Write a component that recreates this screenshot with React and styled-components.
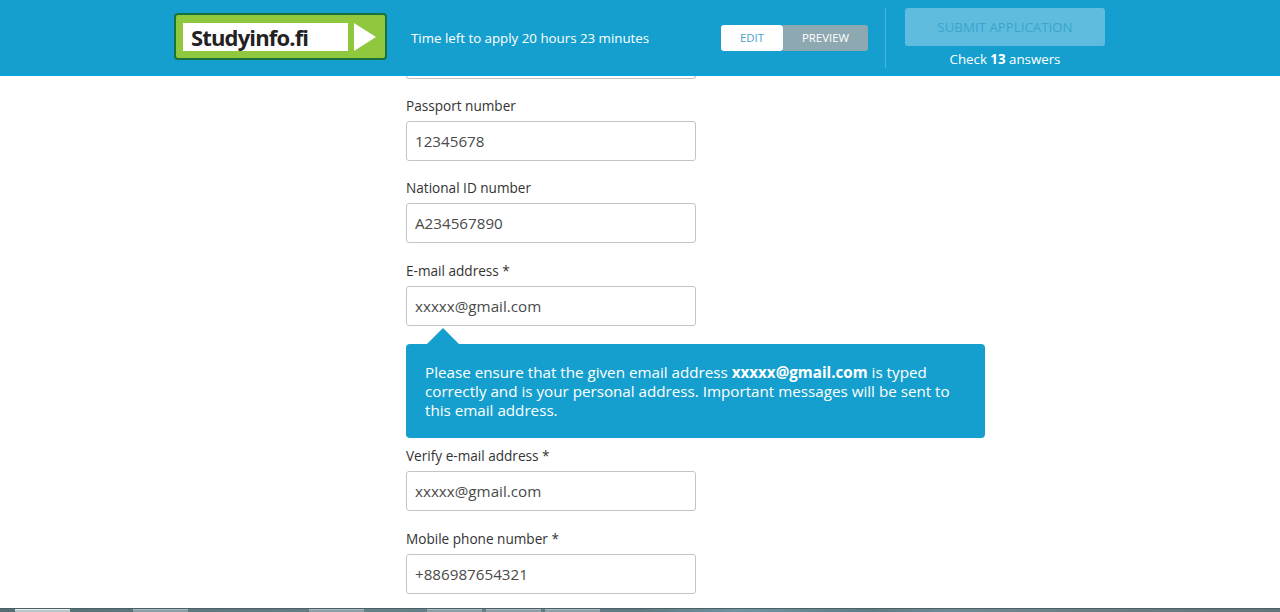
import React from "react";
import styled, { createGlobalStyle } from "styled-components";

const BLUE = "#159fce";

const GlobalStyle = createGlobalStyle`
  html, body {
    margin: 0;
    padding: 0;
    height: 100%;
    overflow: hidden;
    background: #fff;
    font-family: "Open Sans", "Liberation Sans", sans-serif;
  }
`;

const Page = styled.div`
  height: 612px;
  display: flex;
  flex-direction: column;
  overflow: hidden;
`;

const Header = styled.header`
  flex: none;
  height: 74px;
  background: ${BLUE};
  border-bottom: 2px solid #0ea3d8;
  display: flex;
  align-items: flex-start;
`;

const Logo = styled.div`
  box-sizing: border-box;
  width: 213px;
  height: 47px;
  margin: 13px 0 0 174px;
  padding: 8px 9px 7px 7px;
  background: #8fc73e;
  border: 2px solid #17733c;
  border-radius: 4px;
  display: flex;
  align-items: center;
  gap: 6px;
`;

const LogoName = styled.div`
  width: 166px;
  height: 28px;
  background: #fff;
  padding-left: 8px;
  box-sizing: border-box;
  font-size: 22px;
  font-weight: 700;
  line-height: 28px;
  letter-spacing: -0.85px;
  color: #222;
`;

const LogoArrow = styled.div`
  width: 0;
  height: 0;
  border-left: 22px solid #fff;
  border-top: 14px solid transparent;
  border-bottom: 14px solid transparent;
`;

const TimeLeft = styled.div`
  width: 310px;
  margin: 29px 0 0 24px;
  font-size: 13.3px;
  line-height: 19px;
  color: #fff;
`;

const Switch = styled.div`
  display: flex;
  margin-top: 25px;
  height: 26px;
`;

const SwitchButton = styled.div`
  box-sizing: border-box;
  width: ${(props) => (props.active ? "62px" : "85px")};
  height: 26px;
  line-height: 26px;
  text-align: center;
  font-size: 11.4px;
  border-radius: ${(props) => (props.active ? "3px" : "0 3px 3px 0")};
  background: ${(props) => (props.active ? "#fff" : "#8ea8b2")};
  color: ${(props) => (props.active ? "#4a9fcc" : "#fff")};
`;

const Divider = styled.div`
  width: 1px;
  height: 60px;
  margin: 8px 0 0 17px;
  background: #4db5d8;
`;

const SubmitColumn = styled.div`
  width: 200px;
  margin: 8px 0 0 19px;
  display: flex;
  flex-direction: column;
  align-items: center;
`;

const SubmitButton = styled.div`
  width: 100%;
  height: 38px;
  line-height: 38px;
  text-align: center;
  font-size: 13.3px;
  border-radius: 3px;
  background: #5fbcdf;
  color: #3aa5cd;
`;

const CheckAnswers = styled.div`
  margin-top: 4px;
  font-size: 13.3px;
  line-height: 18px;
  color: #fff;

  b {
    font-weight: 700;
  }
`;

const Main = styled.main`
  flex: 1;
  min-height: 0;
  overflow: hidden;
  padding-left: 406px;
`;

const CutInput = styled.div`
  box-sizing: border-box;
  width: 290px;
  height: 3px;
  border: 1px solid #c4c4c4;
  border-top: none;
  border-radius: 0 0 3px 3px;
  margin-bottom: 18px;
`;

const Field = styled.div`
  width: 290px;
  margin-bottom: 18.4px;
`;

const Label = styled.div`
  font-size: 13.6px;
  font-weight: 500;
  line-height: 18px;
  margin-bottom: 6px;
  color: #333;
`;

const Input = styled.div`
  box-sizing: border-box;
  height: 40px;
  padding-left: 8px;
  line-height: 38px;
  font-size: 15.2px;
  color: #4a4a4a;
  background: #fff;
  border: 1px solid #c4c4c4;
  border-radius: 3px;
`;

const Notice = styled.div`
  position: relative;
  box-sizing: border-box;
  width: 579px;
  height: 94px;
  margin-bottom: 9px;
  padding: 19px 19px;
  background: ${BLUE};
  border-radius: 4px;
  color: #fff;
  font-size: 15.2px;
  line-height: 19px;

  b {
    font-weight: 700;
  }

  &::before {
    content: "";
    position: absolute;
    top: -16px;
    left: 21px;
    border-left: 16px solid transparent;
    border-right: 16px solid transparent;
    border-bottom: 16px solid ${BLUE};
  }
`;

const Taskbar = styled.div`
  flex: none;
  height: 4px;
  display: flex;
  align-items: flex-end;
  background: linear-gradient(
    90deg,
    #566f75 0%,
    #64828a 30%,
    #5d7c86 50%,
    #6f95a3 58%,
    #5d7d88 68%,
    #6d8c99 74%,
    #6b7f84 85%,
    #62757a 100%
  );
  border-top: 1px solid #4d5f63;
  box-sizing: border-box;
`;

const TaskItem = styled.div`
  flex: none;
  box-sizing: border-box;
  width: 55px;
  height: 3px;
  margin-left: ${(props) => props.gap}px;
  background: ${(props) => (props.active ? "#b9c7cb" : "#8ba0a6")};
  border-top: 1px solid ${(props) => (props.active ? "#e8eeef" : "#a9bbc0")};
`;

const taskGaps = [15, 63, 121, 63, 4, 4];

const fields = [
  { label: "Passport number", value: "12345678" },
  { label: "National ID number", value: "A234567890" },
  { label: "E-mail address *", value: "xxxxx@gmail.com" },
];

export default function App() {
  return (
    <Page>
      <GlobalStyle />
      <Header>
        <Logo>
          <LogoName>Studyinfo.fi</LogoName>
          <LogoArrow />
        </Logo>
        <TimeLeft>Time left to apply 20 hours 23 minutes</TimeLeft>
        <Switch>
          <SwitchButton active>EDIT</SwitchButton>
          <SwitchButton>PREVIEW</SwitchButton>
        </Switch>
        <Divider />
        <SubmitColumn>
          <SubmitButton>SUBMIT APPLICATION</SubmitButton>
          <CheckAnswers>
            Check <b>13</b> answers
          </CheckAnswers>
        </SubmitColumn>
      </Header>
      <Main>
        <CutInput />
        {fields.map((f) => (
          <Field key={f.label}>
            <Label>{f.label}</Label>
            <Input>{f.value}</Input>
          </Field>
        ))}
        <Notice>
          Please ensure that the given email address <b>xxxxx@gmail.com</b> is
          typed correctly and is your personal address. Important messages will
          be sent to this email address.
        </Notice>
        <Field>
          <Label>Verify e-mail address *</Label>
          <Input>xxxxx@gmail.com</Input>
        </Field>
        <Field>
          <Label>Mobile phone number *</Label>
          <Input>+886987654321</Input>
        </Field>
      </Main>
      <Taskbar>
        {taskGaps.map((gap, i) => (
          <TaskItem key={i} gap={gap} active={i === 0} />
        ))}
      </Taskbar>
    </Page>
  );
}
